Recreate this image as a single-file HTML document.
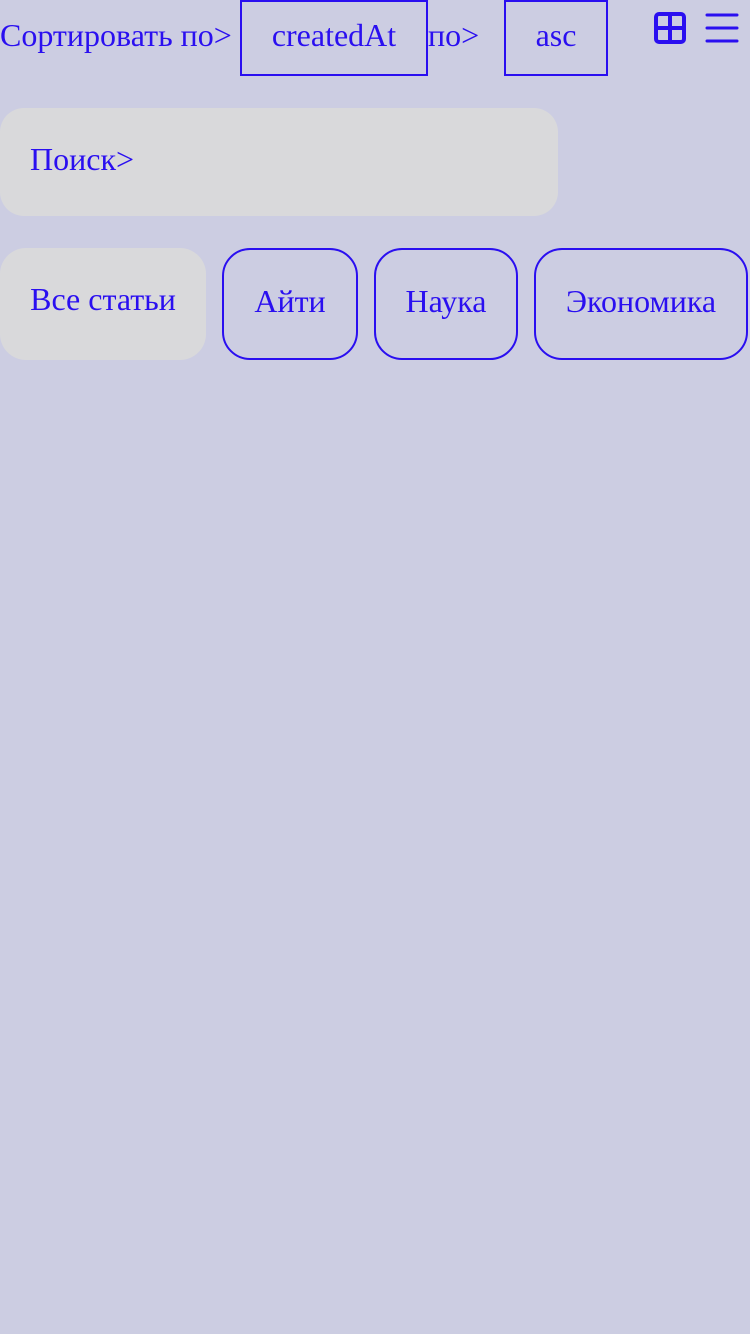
<!DOCTYPE html>
<html><head><meta charset="utf-8"><style>
body{margin:0;width:750px;height:1334px;background:#cccde2;font-family:"Liberation Serif",serif;font-size:32px;color:#2a0ff0;position:relative;overflow:hidden}
.a{position:absolute;white-space:nowrap;line-height:36px}
.box{position:absolute;box-sizing:border-box;border:2px solid #2a0ff0;display:flex;align-items:center;justify-content:center;padding-bottom:5px}
.chip{position:absolute;box-sizing:border-box;top:248px;height:112px;border:2px solid #2a0ff0;border-radius:28px;display:flex;align-items:center;justify-content:center;padding-bottom:5px}
</style></head><body>
<div class="a" style="left:0;top:17px">Сортировать по&gt;</div>
<div class="box" style="left:240px;top:0;width:188px;height:76px">createdAt</div>
<div class="a" style="left:428px;top:17px">по&gt;</div>
<div class="box" style="left:504px;top:0;width:104px;height:76px">asc</div>
<svg style="position:absolute;left:650px;top:8px" width="96" height="40" viewBox="650 8 96 40">
<rect x="656" y="14" width="28" height="28" rx="3" fill="none" stroke="#2a0ff0" stroke-width="4"/>
<path d="M670 14V42M656 28H684" stroke="#2a0ff0" stroke-width="4"/>
<path d="M707 15H737M707 28H737M707 41H737" stroke="#2a0ff0" stroke-width="3" stroke-linecap="round"/>
</svg>
<div style="position:absolute;left:0;top:108px;width:558px;height:108px;background:#d9d9db;border-radius:24px"></div>
<div class="a" style="left:30px;top:141px">Поиск&gt;</div>
<div class="chip" style="left:0;width:206px;background:#d9d9db;border:none;border-radius:26px;align-items:flex-start;padding-top:33px">Все статьи</div>
<div class="chip" style="left:222px;width:136px">Айти</div>
<div class="chip" style="left:374px;width:144px">Наука</div>
<div class="chip" style="left:534px;width:214px">Экономика</div>
</body></html>
